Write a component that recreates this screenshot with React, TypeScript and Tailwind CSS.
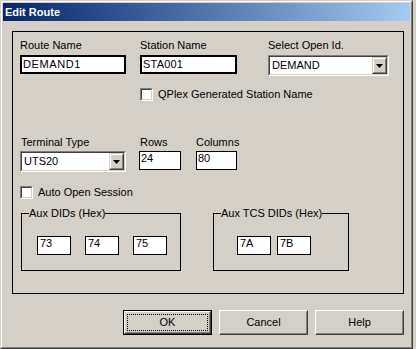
import React from "react";

const font = { fontFamily: '"Liberation Sans", Arial, sans-serif' };

function Sunken({ className, children }: { className: string; children?: React.ReactNode }) {
  return (
    <div className={`border border-t-[#808080] border-l-[#808080] border-b-white border-r-white ${className}`}>
      <div className="w-full h-full border border-t-[#404040] border-l-[#404040] border-b-[#d4d0c8] border-r-[#d4d0c8] bg-white flex items-center">
        {children}
      </div>
    </div>
  );
}

function Combo({ value, className }: { value: string; className: string }) {
  return (
    <Sunken className={className}>
      <span className="flex-1 pl-[2px] text-[11px] leading-[13px] text-black">{value}</span>
      <div className="h-full w-[15px] border border-t-[#d4d0c8] border-l-[#d4d0c8] border-b-[#404040] border-r-[#404040] bg-[#d4d0c8]">
        <div className="w-full h-full border border-t-white border-l-white border-b-[#808080] border-r-[#808080] flex items-center justify-center">
          <svg width="7" height="4" viewBox="0 0 7 4">
            <path d="M0 0h7L3.5 4z" fill="#000" />
          </svg>
        </div>
      </div>
    </Sunken>
  );
}

function Check({ label }: { label: string }) {
  return (
    <div className="flex items-center gap-[5px]">
      <Sunken className="w-[13px] h-[13px]" />
      <span className="text-[11px] leading-[13px] text-black">{label}</span>
    </div>
  );
}

function Field({ value, className }: { value: string; className: string }) {
  return (
    <div className={`border border-black bg-white pl-[1px] text-[11px] leading-[13px] text-black ${className}`}>
      {value}
    </div>
  );
}

function Btn({ label, isDefault }: { label: string; isDefault?: boolean }) {
  if (isDefault) {
    return (
      <div className="w-[89px] h-[25px] border border-black">
        <div className="w-full h-full border border-t-white border-l-white border-b-[#404040] border-r-[#404040]">
          <div className="w-full h-full border border-t-[#d4d0c8] border-l-[#d4d0c8] border-b-[#808080] border-r-[#808080] p-[1px]">
            <div className="w-full h-full border border-dotted border-black flex items-center justify-center text-[11px] text-black">
              {label}
            </div>
          </div>
        </div>
      </div>
    );
  }
  return (
    <div className="w-[89px] h-[25px] border border-t-white border-l-white border-b-[#404040] border-r-[#404040]">
      <div className="w-full h-full border border-t-[#d4d0c8] border-l-[#d4d0c8] border-b-[#808080] border-r-[#808080] flex items-center justify-center text-[11px] text-black">
        {label}
      </div>
    </div>
  );
}

function Group({ title, className, children }: { title: string; className: string; children: React.ReactNode }) {
  return (
    <div className={`relative border border-black h-[58px] ${className}`}>
      <span className="absolute left-[7px] top-[-7px] bg-[#d4d0c8] text-[11px] leading-[13px] text-black">{title}</span>
      <div className="flex mt-[22px]">{children}</div>
    </div>
  );
}

export default function App() {
  return (
    <div className="w-[416px] h-[349px] bg-[#d4d0c8]" style={font}>
      <div className="w-[413px] h-[349px] border border-t-[#d4d0c8] border-l-[#d4d0c8] border-b-[#404040] border-r-[#404040]">
        <div className="w-full h-full border border-t-white border-l-white border-b-[#808080] border-r-[#808080] p-[1px] flex flex-col">
          <div className="h-[18px] bg-gradient-to-r from-[#0a246a] to-[#a6caf0] flex items-center pl-[2px]">
            <span className="text-white font-bold text-[11px] leading-[13px]">Edit Route</span>
          </div>

          <div className="ml-[9px] mt-[10px] w-[392px] h-[263px] border border-black pl-[7px] flex flex-col text-[11px] leading-[13px] text-black">
            <div className="flex mt-[7px]">
              <div className="w-[120px] flex flex-col gap-[3px]">
                <span>Route Name</span>
                <Field value="DEMAND1" className="w-[106px] h-[19px] border-2 tracking-[0.6px] pt-[1px]" />
              </div>
              <div className="w-[128px] flex flex-col gap-[3px]">
                <span>Station Name</span>
                <Field value="STA001" className="w-[97px] h-[19px] border-2 tracking-[0.2px] pt-[1px]" />
              </div>
              <div className="flex flex-col gap-[3px]">
                <span>Select Open Id.</span>
                <Combo value="DEMAND" className="w-[121px] h-[21px]" />
              </div>
            </div>

            <div className="ml-[120px] mt-[12px]">
              <Check label="QPlex Generated Station Name" />
            </div>

            <div className="flex mt-[35px]">
              <div className="w-[119px] flex flex-col gap-[2px]">
                <span className="pl-[1px]">Terminal Type</span>
                <Combo value="UTS20" className="w-[106px] h-[21px]" />
              </div>
              <div className="w-[57px] flex flex-col gap-[2px]">
                <span className="pl-[1px]">Rows</span>
                <Field value="24" className="w-[42px] h-[19px]" />
              </div>
              <div className="flex flex-col gap-[2px]">
                <span>Columns</span>
                <Field value="80" className="w-[41px] h-[19px]" />
              </div>
            </div>

            <div className="mt-[14px]">
              <Check label="Auto Open Session" />
            </div>

            <div className="flex mt-[14px] ml-[1px] gap-[32px]">
              <Group title="Aux DIDs (Hex)" className="w-[160px]">
                <div className="flex ml-[15px] gap-[14px]">
                  <Field value="73" className="w-[34px] h-[19px] pl-[2px]" />
                  <Field value="74" className="w-[34px] h-[19px] pl-[2px]" />
                  <Field value="75" className="w-[34px] h-[19px] pl-[2px]" />
                </div>
              </Group>
              <Group title="Aux TCS DIDs (Hex)" className="w-[136px]">
                <div className="flex ml-[23px] gap-[6px]">
                  <Field value="7A" className="w-[34px] h-[19px] pl-[2px]" />
                  <Field value="7B" className="w-[34px] h-[19px] pl-[2px]" />
                </div>
              </Group>
            </div>
          </div>

          <div className="flex ml-[120px] mt-[16px] gap-[7px]">
            <Btn label="OK" isDefault />
            <Btn label="Cancel" />
            <Btn label="Help" />
          </div>
        </div>
      </div>
    </div>
  );
}
